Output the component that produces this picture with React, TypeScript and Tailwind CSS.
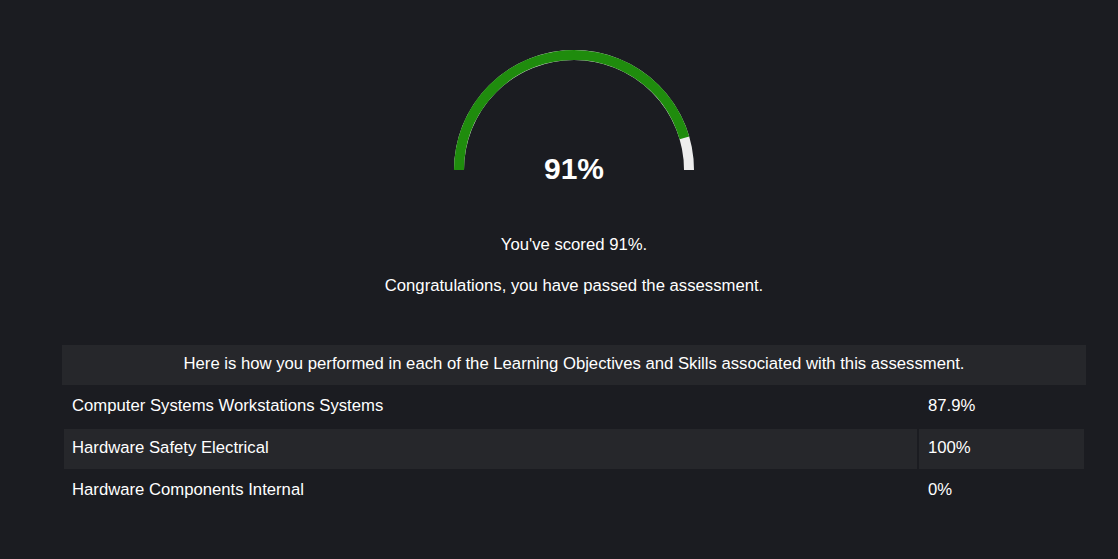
export default function App() {
  const pct = 91
  const r = 115
  const cx = 125
  const cy = 125
  const angle = Math.PI * (1 - pct / 100)
  const ex = cx + r * Math.cos(angle)
  const ey = cy - r * Math.sin(angle)

  const rows = [
    { name: "Computer Systems Workstations Systems", score: "87.9%" },
    { name: "Hardware Safety Electrical", score: "100%" },
    { name: "Hardware Components Internal", score: "0%" },
  ]

  return (
    <div className="min-h-screen bg-[#1b1c21] text-white font-['Liberation_Sans',Arial,sans-serif]">
      <div className="ml-[62px] w-[1024px] pt-[45px] flex flex-col items-center">
        <svg width="250" height="140" viewBox="0 0 250 140">
          <path d={`M ${cx - r} ${cy} A ${r} ${r} 0 0 1 ${cx + r} ${cy}`} fill="none" stroke="#ededed" strokeWidth="10" />
          <path d={`M ${cx - r} ${cy} A ${r} ${r} 0 0 1 ${ex} ${ey}`} fill="none" stroke="#1f8c0d" strokeWidth="10" />
          <text x={cx} y="134" textAnchor="middle" fill="#ffffff" fontSize="30" fontWeight="700" fontFamily="Liberation Sans, Arial, sans-serif">
            {pct}%
          </text>
        </svg>
        <p className="mt-[48px] text-[16.7px] leading-6">You've scored {pct}%.</p>
        <p className="mt-[17px] text-[16.7px] leading-6">Congratulations, you have passed the assessment.</p>

        <div className="mt-[47px] w-full">
          <div className="h-10 bg-[#26272b] flex items-center justify-center text-[16.7px] pb-[2px]">
            Here is how you performed in each of the Learning Objectives and Skills associated with this assessment.
          </div>
          <div className="grid grid-cols-[853px_165px] gap-[2px] p-[2px]">
            {rows.map((row, i) => (
              <div key={row.name} className="contents">
                <div className={`h-10 flex items-center pl-2 pb-[2px] text-[16.7px] ${i % 2 === 1 ? "bg-[#26272b]" : ""}`}>{row.name}</div>
                <div className={`h-10 flex items-center pl-[9px] pb-[2px] text-[16.7px] ${i % 2 === 1 ? "bg-[#26272b]" : ""}`}>{row.score}</div>
              </div>
            ))}
          </div>
        </div>
      </div>
    </div>
  )
}
